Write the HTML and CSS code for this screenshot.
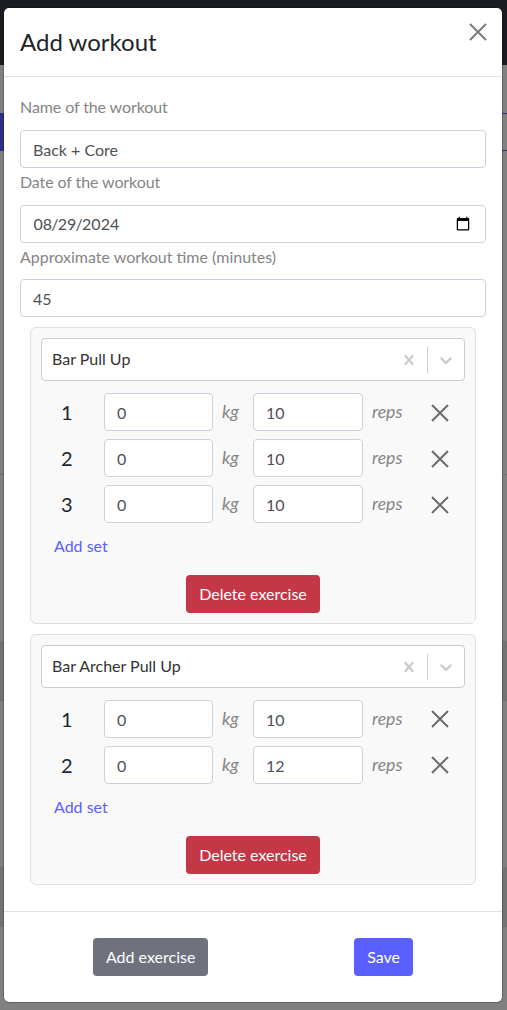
FILE: index.html
```html
<!DOCTYPE html>
<html lang="en">
<head>
<meta charset="utf-8">
<title>Add workout</title>
<link rel="stylesheet" href="styles.css">
</head>
<body>
<div class="page">
  <div class="nav"></div>
  <div class="tabs"><div class="tab-active"></div><div class="tab-rest"></div></div>
  <div class="row-a"></div>
  <div class="row-light"></div>
  <div class="row-dark"></div>
  <div class="row-light"></div>
  <div class="row-dark"></div>
</div>
<div class="modal">
  <div class="modal-header">
    <h5 class="modal-title">Add workout</h5>
    <svg class="close" viewBox="0 0 18 18"><path d="M1 1L17 17M17 1L1 17"/></svg>
  </div>
  <div class="modal-body">
    <label class="label label-first label-tight">Name of the workout</label>
    <input class="input" type="text" value="Back + Core">
    <label class="label label-tight">Date of the workout</label>
    <input class="input input-date" type="date" value="2024-08-29">
    <label class="label">Approximate workout time (minutes)</label>
    <input class="input" type="number" value="45">

    <div class="card card-first">
      <div class="select">
        <span class="select-value">Bar Pull Up</span>
        <svg class="select-x" viewBox="0 0 20 20"><path d="M14.348 14.849c-0.469 0.469-1.229 0.469-1.697 0l-2.651-3.030-2.651 3.029c-0.469 0.469-1.229 0.469-1.697 0-0.469-0.469-0.469-1.229 0-1.697l2.758-3.15-2.759-3.152c-0.469-0.469-0.469-1.228 0-1.697s1.228-0.469 1.697 0l2.652 3.031 2.651-3.031c0.469-0.469 1.228-0.469 1.697 0s0.469 1.229 0 1.697l-2.758 3.152 2.758 3.15c0.469 0.469 0.469 1.229 0 1.698z"/></svg>
        <span class="select-sep"></span>
        <svg class="select-chev" viewBox="0 0 20 20"><path d="M4.516 7.548c0.436-0.446 1.043-0.481 1.576 0l3.908 3.747 3.908-3.747c0.533-0.481 1.141-0.446 1.574 0 0.436 0.445 0.408 1.197 0 1.615-0.406 0.418-4.695 4.502-4.695 4.502-0.217 0.223-0.502 0.335-0.787 0.335s-0.57-0.112-0.789-0.335c0 0-4.287-4.084-4.695-4.502s-0.436-1.17 0-1.615z"/></svg>
      </div>
      <div class="set">
        <span class="set-num">1</span><input class="input set-input" type="number" value="0"><em class="unit unit-kg">kg</em><input class="input set-input set-reps" type="number" value="10"><em class="unit unit-reps">reps</em>
        <svg class="set-x" viewBox="0 0 18 18"><path d="M1 1L17 17M17 1L1 17"/></svg>
      </div>
      <div class="set">
        <span class="set-num">2</span><input class="input set-input" type="number" value="0"><em class="unit unit-kg">kg</em><input class="input set-input set-reps" type="number" value="10"><em class="unit unit-reps">reps</em>
        <svg class="set-x" viewBox="0 0 18 18"><path d="M1 1L17 17M17 1L1 17"/></svg>
      </div>
      <div class="set">
        <span class="set-num">3</span><input class="input set-input" type="number" value="0"><em class="unit unit-kg">kg</em><input class="input set-input set-reps" type="number" value="10"><em class="unit unit-reps">reps</em>
        <svg class="set-x" viewBox="0 0 18 18"><path d="M1 1L17 17M17 1L1 17"/></svg>
      </div>
      <a class="add-set">Add set</a>
      <div class="card-actions"><button class="btn btn-danger">Delete exercise</button></div>
    </div>

    <div class="card">
      <div class="select">
        <span class="select-value">Bar Archer Pull Up</span>
        <svg class="select-x" viewBox="0 0 20 20"><path d="M14.348 14.849c-0.469 0.469-1.229 0.469-1.697 0l-2.651-3.030-2.651 3.029c-0.469 0.469-1.229 0.469-1.697 0-0.469-0.469-0.469-1.229 0-1.697l2.758-3.15-2.759-3.152c-0.469-0.469-0.469-1.228 0-1.697s1.228-0.469 1.697 0l2.652 3.031 2.651-3.031c0.469-0.469 1.228-0.469 1.697 0s0.469 1.229 0 1.697l-2.758 3.152 2.758 3.15c0.469 0.469 0.469 1.229 0 1.698z"/></svg>
        <span class="select-sep"></span>
        <svg class="select-chev" viewBox="0 0 20 20"><path d="M4.516 7.548c0.436-0.446 1.043-0.481 1.576 0l3.908 3.747 3.908-3.747c0.533-0.481 1.141-0.446 1.574 0 0.436 0.445 0.408 1.197 0 1.615-0.406 0.418-4.695 4.502-4.695 4.502-0.217 0.223-0.502 0.335-0.787 0.335s-0.57-0.112-0.789-0.335c0 0-4.287-4.084-4.695-4.502s-0.436-1.17 0-1.615z"/></svg>
      </div>
      <div class="set">
        <span class="set-num">1</span><input class="input set-input" type="number" value="0"><em class="unit unit-kg">kg</em><input class="input set-input set-reps" type="number" value="10"><em class="unit unit-reps">reps</em>
        <svg class="set-x" viewBox="0 0 18 18"><path d="M1 1L17 17M17 1L1 17"/></svg>
      </div>
      <div class="set">
        <span class="set-num">2</span><input class="input set-input" type="number" value="0"><em class="unit unit-kg">kg</em><input class="input set-input set-reps" type="number" value="12"><em class="unit unit-reps">reps</em>
        <svg class="set-x" viewBox="0 0 18 18"><path d="M1 1L17 17M17 1L1 17"/></svg>
      </div>
      <a class="add-set">Add set</a>
      <div class="card-actions"><button class="btn btn-danger">Delete exercise</button></div>
    </div>
  </div>
  <div class="modal-footer">
    <button class="btn btn-secondary">Add exercise</button>
    <button class="btn btn-primary">Save</button>
  </div>
</div>
</body>
</html>
```

FILE: styles.css
```css
* { box-sizing: border-box; }
html, body { margin: 0; height: 1010px; overflow: hidden; }
body { background: #808080; font-family: "Lato", sans-serif; font-size: 16px; line-height: 24px; color: #212529; }

.page { display: flex; flex-direction: column; }
.nav { height: 65px; background: #1b1c22; }
.tabs { display: flex; height: 38px; margin-top: 48px; }
.tab-active { width: 100px; background: #2d2f80; }
.tab-rest { flex: 1; border-top: 1px solid #2d2f80; border-bottom: 1px solid #2d2f80; }
.row-a { height: 324px; border-bottom: 1px solid #6e6e6e; }
.row-light { height: 166px; }
.row-dark { height: 60px; background: #737373; border-bottom: 1px solid #6e6e6e; }

.modal { position: absolute; left: 3px; top: 7px; width: 500px; height: 996px; background: #fff; background-clip: padding-box; border: 1px solid rgba(0, 0, 0, 0.2); border-radius: 6px; display: flex; flex-direction: column; }
.modal-header { position: relative; height: 69px; padding: 16px; border-bottom: 1px solid #dee2e6; flex: none; }
.modal-title { margin: 0; font-size: 24px; font-weight: 400; line-height: 36px; color: #212529; }
.close { position: absolute; left: 465px; top: 15px; width: 18px; height: 18px; }
.close path { fill: none; stroke: #7b7b7b; stroke-width: 2; }

.modal-body { flex: 1; padding: 16px 16px 16px; }
.label { display: block; height: 24px; margin: 2px 0 10.5px; color: #858585; }
.label-first { margin: 2px 0 11px; }
.label-tight { letter-spacing: -0.1px; }
.input { display: block; width: 100%; height: 38px; padding: 6px 12px; font: inherit; line-height: 24px; color: #4d5154; background: #fff; border: 1px solid #cfd0de; border-radius: 4px; outline: 0; appearance: textfield; }
.input-date { padding-left: 12.5px; }
.input-date::-webkit-datetime-edit-month-field,
.input-date::-webkit-datetime-edit-day-field,
.input-date::-webkit-datetime-edit-year-field { padding: 0; }
.input-date::-webkit-datetime-edit-text { padding: 0; margin: 0 -0.75px; }

.card { margin: 10px; padding: 10px; background: #f9f9f9; border: 1px solid #dfdfdf; border-radius: 6px; }
.select { display: flex; align-items: center; height: 43px; background: #fff; border: 1px solid #ccc; border-radius: 4px; padding: 0 8px 0 10px; }
.select-value { flex: 1; font-size: 16px; color: #333; padding-bottom: 1px; }
.select-x { width: 20px; height: 20px; fill: #ccc; margin-right: 8px; }
.select-sep { width: 1px; height: 26px; background: #ccc; margin-right: 8px; }
.select-chev { width: 20px; height: 20px; fill: #ccc; }

.set { display: flex; align-items: center; height: 38px; margin-top: 8px; }
.select + .set { margin-top: 12px; }
.set-num { width: 63px; padding-left: 20px; font-size: 20px; color: #212529; }
.set-input { width: 109px; flex: none; }
.set-reps { width: 110px; }
.unit { color: #858585; font-style: italic; font-size: 17.6px; }
.unit-kg { width: 40px; padding-left: 9px; }
.unit-reps { width: 58px; padding-left: 9px; }
.set-x { width: 18px; height: 18px; margin-left: 10px; flex: none; }
.card-first .set-x { margin-top: 2px; }
.set-x path { fill: none; stroke: #6b6b6b; stroke-width: 2; }

.add-set { display: block; margin: 11px 0 0 13px; height: 24px; color: #5a5fff; }
.card-actions { display: flex; justify-content: center; margin-top: 17px; }

.btn { height: 38px; padding: 6px 12px; font: inherit; line-height: 24px; color: #fff; border: 1px solid transparent; border-radius: 4px; }
.btn-danger { background: #c43746; }
.btn-secondary { background: #6f727d; }
.btn-primary { background: #5a5fff; }

.modal-footer { display: flex; justify-content: space-around; align-items: flex-start; flex: none; height: 91px; padding: 26px 16px 0; border-top: 1px solid #dee2e6; }
```
